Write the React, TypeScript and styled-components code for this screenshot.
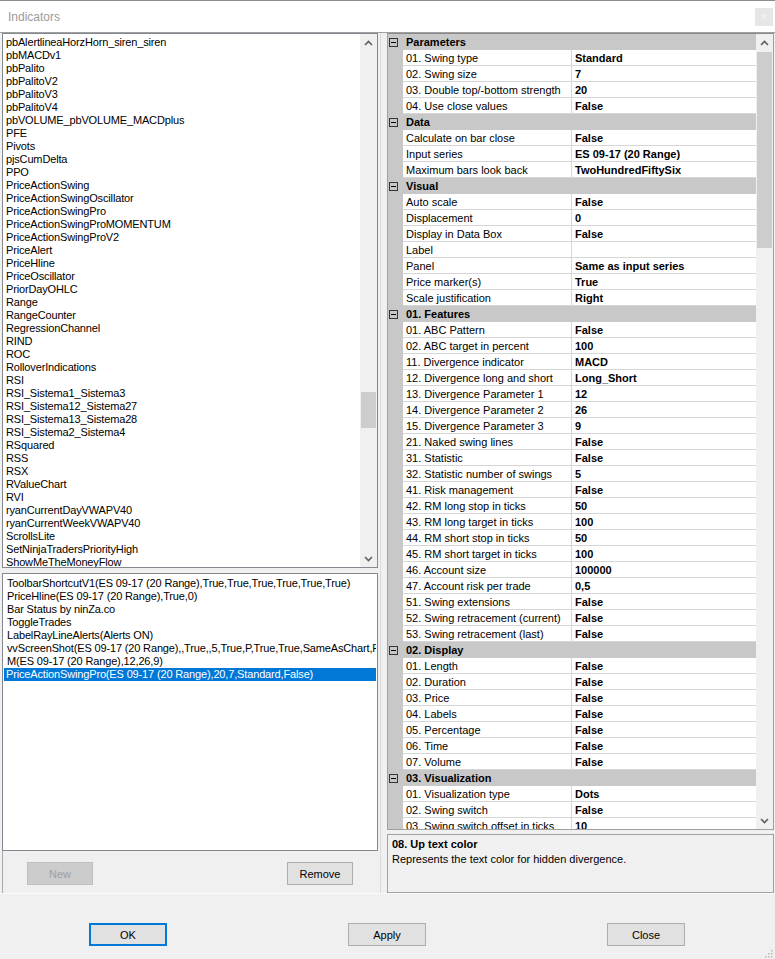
import React from "react";
import styled, { createGlobalStyle } from "styled-components";

type Prop = { name: string; value: string };
type Category = { title: string; props: Prop[] };

const available: string[] = [
    "pbAlertlineaHorzHorn_siren_siren",
    "pbMACDv1",
    "pbPalito",
    "pbPalitoV2",
    "pbPalitoV3",
    "pbPalitoV4",
    "pbVOLUME_pbVOLUME_MACDplus",
    "PFE",
    "Pivots",
    "pjsCumDelta",
    "PPO",
    "PriceActionSwing",
    "PriceActionSwingOscillator",
    "PriceActionSwingPro",
    "PriceActionSwingProMOMENTUM",
    "PriceActionSwingProV2",
    "PriceAlert",
    "PriceHline",
    "PriceOscillator",
    "PriorDayOHLC",
    "Range",
    "RangeCounter",
    "RegressionChannel",
    "RIND",
    "ROC",
    "RolloverIndications",
    "RSI",
    "RSI_Sistema1_Sistema3",
    "RSI_Sistema12_Sistema27",
    "RSI_Sistema13_Sistema28",
    "RSI_Sistema2_Sistema4",
    "RSquared",
    "RSS",
    "RSX",
    "RValueChart",
    "RVI",
    "ryanCurrentDayVWAPV40",
    "ryanCurrentWeekVWAPV40",
    "ScrollsLite",
    "SetNinjaTradersPriorityHigh",
    "ShowMeTheMoneyFlow",
];

const applied: string[] = [
    "ToolbarShortcutV1(ES 09-17 (20 Range),True,True,True,True,True,True)",
    "PriceHline(ES 09-17 (20 Range),True,0)",
    "Bar Status by ninZa.co",
    "ToggleTrades",
    "LabelRayLineAlerts(Alerts ON)",
    "vvScreenShot(ES 09-17 (20 Range),,True,,5,True,P,True,True,SameAsChart,PNG)",
    "M(ES 09-17 (20 Range),12,26,9)",
    "PriceActionSwingPro(ES 09-17 (20 Range),20,7,Standard,False)",
];

const p = (name: string, value: string): Prop => ({ name, value });

const categories: Category[] = [
    {
        title: "Parameters",
        props: [
            p("01. Swing type", "Standard"),
            p("02. Swing size", "7"),
            p("03. Double top/-bottom strength", "20"),
            p("04. Use close values", "False"),
        ],
    },
    {
        title: "Data",
        props: [
            p("Calculate on bar close", "False"),
            p("Input series", "ES 09-17 (20 Range)"),
            p("Maximum bars look back", "TwoHundredFiftySix"),
        ],
    },
    {
        title: "Visual",
        props: [
            p("Auto scale", "False"),
            p("Displacement", "0"),
            p("Display in Data Box", "False"),
            p("Label", ""),
            p("Panel", "Same as input series"),
            p("Price marker(s)", "True"),
            p("Scale justification", "Right"),
        ],
    },
    {
        title: "01. Features",
        props: [
            p("01. ABC Pattern", "False"),
            p("02. ABC target in percent", "100"),
            p("11. Divergence indicator", "MACD"),
            p("12. Divergence long and short", "Long_Short"),
            p("13. Divergence Parameter 1", "12"),
            p("14. Divergence Parameter 2", "26"),
            p("15. Divergence Parameter 3", "9"),
            p("21. Naked swing lines", "False"),
            p("31. Statistic", "False"),
            p("32. Statistic number of swings", "5"),
            p("41. Risk management", "False"),
            p("42. RM long stop in ticks", "50"),
            p("43. RM long target in ticks", "100"),
            p("44. RM short stop in ticks", "50"),
            p("45. RM short target in ticks", "100"),
            p("46. Account size", "100000"),
            p("47. Account risk per trade", "0,5"),
            p("51. Swing extensions", "False"),
            p("52. Swing retracement (current)", "False"),
            p("53. Swing retracement (last)", "False"),
        ],
    },
    {
        title: "02. Display",
        props: [
            p("01. Length", "False"),
            p("02. Duration", "False"),
            p("03. Price", "False"),
            p("04. Labels", "False"),
            p("05. Percentage", "False"),
            p("06. Time", "False"),
            p("07. Volume", "False"),
        ],
    },
    {
        title: "03. Visualization",
        props: [
            p("01. Visualization type", "Dots"),
            p("02. Swing switch", "False"),
            p("03. Swing switch offset in ticks", "10"),
        ],
    },
];

const Chevron: React.FC<{ down?: boolean }> = ({ down }) => (
    <svg width="9" height="6" viewBox="0 0 9 6">
        <polyline
            points={down ? "1,1 4.5,4.5 8,1" : "1,5 4.5,1.5 8,5"}
            fill="none"
            stroke="#606060"
            strokeWidth="1.6"
        />
    </svg>
);

const ScrollBar: React.FC<{ thumbTop: number; thumbSize: number }> = ({ thumbTop, thumbSize }) => (
    <ScrollTrack>
        <ArrowCell><Chevron /></ArrowCell>
        <ThumbLane>
            <ThumbGap $size={thumbTop} />
            <Thumb $size={thumbSize} />
        </ThumbLane>
        <ArrowCell><Chevron down /></ArrowCell>
    </ScrollTrack>
);

const PropertyRows: React.FC = () => (
    <>
        {categories.map((cat) => (
            <React.Fragment key={cat.title}>
                <CategoryRow>
                    <CollapseBox />
                    {cat.title}
                </CategoryRow>
                {cat.props.map((prop) => (
                    <PropRow key={prop.name}>
                        <Gutter />
                        <PropName>{prop.name}</PropName>
                        <PropValue>{prop.value}</PropValue>
                    </PropRow>
                ))}
            </React.Fragment>
        ))}
    </>
);

const App: React.FC = () => (
    <>
        <GlobalStyle />
        <Dialog>
            <TitleBar>
                <Title>Indicators</Title>
                <CloseButton>×</CloseButton>
            </TitleBar>

            <Body>
                <LeftPane>
                    <ListBox $height={535} $padTop={2}>
                        <ListItems>
                            {available.map((name) => (
                                <ListItem key={name}>{name}</ListItem>
                            ))}
                        </ListItems>
                        <ScrollBar thumbTop={341} thumbSize={36} />
                    </ListBox>

                    <ListBox $height={278} $padTop={3}>
                        <ListItems $pad={1}>
                            {applied.map((name, i) => (
                                <ListItem key={name} $selected={i === applied.length - 1}>
                                    {name}
                                </ListItem>
                            ))}
                        </ListItems>
                    </ListBox>

                    <PaneButtons>
                        <Button disabled>New</Button>
                        <Button>Remove</Button>
                    </PaneButtons>
                </LeftPane>

                <Splitter />

                <RightPane>
                    <PropertyGrid>
                        <GridRows>
                            <PropertyRows />
                        </GridRows>
                        <ScrollBar thumbTop={1} thumbSize={196} />
                    </PropertyGrid>
                    <HelpBox>
                        <HelpTitle>08. Up text color</HelpTitle>
                        <HelpText>Represents the text color for hidden divergence.</HelpText>
                    </HelpBox>
                </RightPane>
            </Body>

            <Footer>
                <Button $wide $focused>OK</Button>
                <Button $wide>Apply</Button>
                <Button $wide>Close</Button>
                <Grip width="10" height="10" viewBox="0 0 10 10">
                    {[[8, 2], [8, 5], [5, 5], [8, 8], [5, 8], [2, 8]].map(([x, y]) => (
                        <rect key={`${x}-${y}`} x={x} y={y} width="1.5" height="1.5" fill="#b8b8b8" />
                    ))}
                </Grip>
            </Footer>
        </Dialog>
    </>
);

export default App;



const GlobalStyle = createGlobalStyle`
    html, body {
        margin: 0;
        padding: 0;
        background: #f0f0f0;
    }
    * {
        box-sizing: border-box;
    }
`;

const Dialog = styled.div`
    width: 775px;
    height: 959px;
    background: #f0f0f0;
    font-family: "Liberation Sans", Arial, sans-serif;
    font-size: 11px;
    color: #000;
    display: flex;
    flex-direction: column;
    overflow: hidden;
`;

const TitleBar = styled.div`
    height: 33px;
    flex: none;
    background: #fff;
    border-top: 1px solid #8c8c8c;
    border-bottom: 1px solid #a0a0a0;
    display: flex;
    align-items: center;
    justify-content: space-between;
    padding: 0 2px 0 8px;
`;

const Title = styled.span`
    font-size: 12px;
    color: #9b9b9b;
`;

const CloseButton = styled.div`
    width: 18px;
    height: 18px;
    background: #e6e6e6;
    color: #f4f4f4;
    font-size: 13px;
    line-height: 18px;
    text-align: center;
`;

const Body = styled.div`
    display: flex;
    height: 860px;
    flex: none;
    padding-left: 2px;
`;

const LeftPane = styled.div`
    width: 376px;
    display: flex;
    flex-direction: column;
    gap: 5px;
`;

const ListBox = styled.div<{ $height: number; $padTop: number }>`
    height: ${(p) => p.$height}px;
    flex: none;
    background: #fff;
    border: 1px solid #828790;
    display: flex;
    overflow: hidden;

    & > div:first-child {
        padding-top: ${(p) => p.$padTop}px;
    }
`;

const ListItems = styled.div<{ $pad?: number }>`
    flex: 1;
    min-width: 0;
    overflow: hidden;
    padding-left: ${(p) => p.$pad ?? 0}px;
    padding-right: ${(p) => p.$pad ?? 0}px;
`;

const ListItem = styled.div<{ $selected?: boolean }>`
    height: 13px;
    line-height: 13px;
    padding-left: ${(p) => (p.$selected ? 2 : 3)}px;
    letter-spacing: -0.15px;
    white-space: nowrap;
    overflow: hidden;
    background: ${(p) => (p.$selected ? "#0078d7" : "transparent")};
    color: ${(p) => (p.$selected ? "#fff" : "#000")};
`;

const ScrollTrack = styled.div`
    width: 17px;
    flex: none;
    background: #f0f0f0;
    display: flex;
    flex-direction: column;
`;

const ArrowCell = styled.div`
    height: 17px;
    flex: none;
    display: flex;
    align-items: center;
    justify-content: center;
`;

const ThumbLane = styled.div`
    flex: 1;
    display: flex;
    flex-direction: column;
    padding: 0 1px;
`;

const ThumbGap = styled.div<{ $size: number }>`
    height: ${(p) => p.$size}px;
    flex: none;
`;

const Thumb = styled.div<{ $size: number }>`
    height: ${(p) => p.$size}px;
    flex: none;
    background: #cdcdcd;
`;

const PaneButtons = styled.div`
    flex: 1;
    margin-top: -5px;
    border-left: 1px solid #a8a8a8;
    display: flex;
    justify-content: space-between;
    align-items: flex-start;
    padding: 11px 25px 0 24px;
`;

const Button = styled.button<{ $wide?: boolean; $focused?: boolean }>`
    width: ${(p) => (p.$wide ? 78 : 66)}px;
    height: 23px;
    padding: 0;
    font-family: "Liberation Sans", Arial, sans-serif;
    font-size: 11px;
    color: #000;
    background: #e1e1e1;
    border: ${(p) => (p.$focused ? "2px solid #0078d7" : "1px solid #adadad")};

    &:disabled {
        background: #cccccc;
        border-color: #bfbfbf;
        color: #a0a0a0;
    }
`;

const Splitter = styled.div`
    width: 9px;
    flex: none;
    padding-left: 2px;

    &::before {
        content: "";
        display: block;
        width: 1px;
        height: 100%;
        background: #dadada;
    }
`;

const RightPane = styled.div`
    width: 387px;
    display: flex;
    flex-direction: column;
    gap: 4px;
`;

const PropertyGrid = styled.div`
    height: 797px;
    flex: none;
    border: 1px solid #a0a0a0;
    border-top-color: #8a8a8a;
    display: flex;
    background: #fff;
    overflow: hidden;
`;

const GridRows = styled.div`
    flex: 1;
    min-width: 0;
    overflow: hidden;
`;

const CategoryRow = styled.div`
    height: 16px;
    background: #c8c8c8;
    display: flex;
    align-items: center;
    padding-left: 1px;
    font-weight: bold;
    white-space: nowrap;
`;

const CollapseBox = styled.span`
    width: 9px;
    height: 9px;
    border: 1px solid #333;
    margin-right: 8px;
    display: flex;
    align-items: center;
    justify-content: center;

    &::after {
        content: "";
        width: 5px;
        height: 1px;
        background: #000;
    }
`;

const PropRow = styled.div`
    height: 16px;
    display: flex;
`;

const Gutter = styled.div`
    width: 15px;
    flex: none;
    background: #c8c8c8;
`;

const PropName = styled.div`
    width: 169px;
    flex: none;
    padding: 1px 0 0 3px;
    line-height: 14px;
    border-right: 1px solid #d6d6d6;
    border-bottom: 1px solid #d6d6d6;
    white-space: nowrap;
    overflow: hidden;
`;

const PropValue = styled.div`
    flex: 1;
    min-width: 0;
    padding: 1px 0 0 3px;
    line-height: 14px;
    font-weight: bold;
    border-bottom: 1px solid #d6d6d6;
    white-space: nowrap;
    overflow: hidden;
`;

const HelpBox = styled.div`
    flex: 1;
    border: 1px solid #a0a0a0;
    padding: 2px 4px;
    line-height: 14px;
`;

const HelpTitle = styled.div`
    font-weight: bold;
`;

const HelpText = styled.div`
    margin-top: 1px;
`;

const Footer = styled.div`
    flex: 1;
    position: relative;
    border-top: 1px solid #fafafa;
    display: flex;
    justify-content: space-between;
    align-items: flex-start;
    padding: 29px 90px 0 89px;
`;

const Grip = styled.svg`
    position: absolute;
    right: 2px;
    bottom: 1px;
`;
